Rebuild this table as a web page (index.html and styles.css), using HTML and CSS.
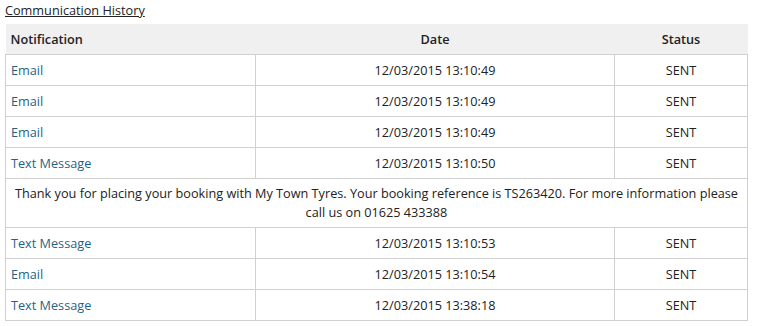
FILE: index.html
```html
<!DOCTYPE html>
<html>
<head>
<meta charset="utf-8">
<link rel="stylesheet" href="styles.css">
</head>
<body>
<div class="wrap">
  <a class="title" href="#">Communication History</a>
  <table class="history">
    <thead>
      <tr><th class="c-notif">Notification</th><th class="c-date">Date</th><th class="c-status">Status</th></tr>
    </thead>
    <tbody>
      <tr><td class="type">Email</td><td class="center">12/03/2015 13:10:49</td><td class="center">SENT</td></tr>
      <tr><td class="type">Email</td><td class="center">12/03/2015 13:10:49</td><td class="center">SENT</td></tr>
      <tr><td class="type">Email</td><td class="center">12/03/2015 13:10:49</td><td class="center">SENT</td></tr>
      <tr><td class="type">Text Message</td><td class="center">12/03/2015 13:10:50</td><td class="center">SENT</td></tr>
      <tr class="msg"><td colspan="3" class="center">Thank you for placing your booking with My Town Tyres. Your booking reference is TS263420. For more information please call us on 01625 433388</td></tr>
      <tr><td class="type">Text Message</td><td class="center">12/03/2015 13:10:53</td><td class="center">SENT</td></tr>
      <tr><td class="type">Email</td><td class="center">12/03/2015 13:10:54</td><td class="center">SENT</td></tr>
      <tr><td class="type">Text Message</td><td class="center">12/03/2015 13:38:18</td><td class="center">SENT</td></tr>
    </tbody>
  </table>
</div>
</body>
</html>
```
FILE: styles.css
```css
html, body {
  margin: 0;
  padding: 0;
  background: #fff;
}
body {
  font-family: "Open Sans", "Liberation Sans", sans-serif;
  font-size: 12.7px;
  color: #222;
}
.wrap {
  padding: 1px 9px 0 5px;
}
.title {
  display: inline-block;
  color: #222;
  text-decoration: underline;
  line-height: 19px;
  height: 23px;
  vertical-align: top;
}
.history {
  width: 743px;
  border-collapse: collapse;
  table-layout: fixed;
}
.history th {
  background: #f0f0f0;
  font-weight: 600;
  height: 30px;
  padding: 0 5px;
  text-align: center;
  border-bottom: 1px solid #d0d0d0;
}
.history th.c-notif {
  text-align: left;
  width: 240px;
}
.history th.c-date {
  width: 349px;
}
.history td {
  border: 1px solid #d0d0d0;
  height: 30px;
  padding: 0 5px;
  line-height: 19px;
}
.history td.type {
  color: #1f6385;
}
.history td.center {
  text-align: center;
}
.history tr.msg td {
  height: auto;
  padding: 5px 5px;
}
```
